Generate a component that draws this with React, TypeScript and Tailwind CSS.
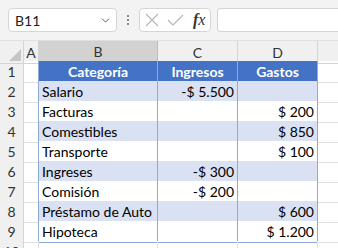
import { ChevronDown } from 'lucide-react';

const ROWS: { cat: string; ing: string; gas: string }[] = [
  { cat: 'Salario', ing: '-$ 5.500', gas: '' },
  { cat: 'Facturas', ing: '', gas: '$ 200' },
  { cat: 'Comestibles', ing: '', gas: '$ 850' },
  { cat: 'Transporte', ing: '', gas: '$ 100' },
  { cat: 'Ingreses', ing: '-$ 300', gas: '' },
  { cat: 'Comisión', ing: '-$ 200', gas: '' },
  { cat: 'Préstamo de Auto', ing: '', gas: '$ 600' },
  { cat: 'Hipoteca', ing: '', gas: '$ 1.200' },
];

const COLS = 'grid-cols-[24px_15px_119px_80px_80px_1fr]';

export default function App() {
  return (
    <div className="w-[338px] h-[248px] overflow-hidden bg-white text-[14px] text-black whitespace-nowrap" style={{ fontFamily: 'Lato, "Open Sans", sans-serif' }}>
      {/* Formula bar */}
      <div className="h-[41px] bg-[#f3f3f3] flex items-center pl-2 border-b border-[#e0e0e0]">
        <div className="w-[109px] h-[24px] bg-white border border-[#d6d6d6] rounded-[4px] flex items-center justify-between pl-[6px] pr-[4px]">
          <span className="text-[14px] text-[#222]">B11</span>
          <ChevronDown size={13} strokeWidth={1.6} className="text-[#444]" />
        </div>
        <div className="w-[22px] flex flex-col items-center gap-[2px]">
          <span className="w-[2px] h-[2px] bg-[#888]" />
          <span className="w-[2px] h-[2px] bg-[#888]" />
          <span className="w-[2px] h-[2px] bg-[#888]" />
        </div>
        <div className="w-[72px] h-[24px] bg-white border border-[#d6d6d6] rounded-[4px] flex items-center pl-[5px]">
          <svg width="14" height="14" viewBox="0 0 14 14" className="text-[#b4b4b4]">
            <path d="M1 1L13 13M13 1L1 13" stroke="currentColor" strokeWidth="1.1" fill="none" />
          </svg>
          <svg width="17" height="12" viewBox="0 0 17 12" className="ml-[8px] text-[#b4b4b4]">
            <path d="M1 6L6 11L16 1" stroke="currentColor" strokeWidth="1.1" fill="none" />
          </svg>
          <span className="ml-[9px] text-[16px] italic text-[#333]" style={{ fontFamily: '"Liberation Serif", serif' }}>
            <span className="font-bold">f</span>x
          </span>
        </div>
        <div className="ml-[6px] flex-1 h-[24px] bg-white border border-[#d6d6d6] rounded-l-[4px] border-r-0" />
      </div>

      {/* Column headers */}
      <div className={`grid ${COLS} h-[20px] bg-[#f0f0f0] text-[#333] text-[14px]`}>
        <div className="relative border-r border-b border-[#d4d4d4]">
          <div className="absolute right-[2px] bottom-[2px] w-0 h-0 border-l-[12px] border-l-transparent border-b-[12px] border-b-[#c6c6c6]" />
        </div>
        <div className="flex items-center justify-center border-r border-b border-[#d4d4d4]">A</div>
        <div className="flex items-center justify-center bg-[#d2d2d2] border-r border-[#bdbdbd] border-b-2 border-b-[#217346]">B</div>
        <div className="flex items-center justify-center border-r border-b border-[#d4d4d4]">C</div>
        <div className="flex items-center justify-center border-r border-b border-[#d4d4d4]">D</div>
        <div className="border-b border-[#d4d4d4]" />
      </div>

      {/* Row 1 */}
      <div className={`grid ${COLS} h-[20px]`}>
        <div className="flex items-center justify-center bg-[#f0f0f0] text-[#333] border-r border-b border-[#d4d4d4]">1</div>
        <div className="border-r border-b border-[#e1e1e1] border-r-[#8eaadb]" />
        <div className="flex items-center justify-center bg-[#4472c4] text-white font-bold border-r border-b border-[#8eaadb]">Categoría</div>
        <div className="flex items-center justify-center bg-[#4472c4] text-white font-bold border-r border-b border-[#8eaadb]">Ingresos</div>
        <div className="flex items-center justify-center bg-[#4472c4] text-white font-bold border-r border-b border-[#8eaadb]">Gastos</div>
        <div className="border-b border-[#e1e1e1]" />
      </div>

      {ROWS.map((r, i) => {
        const band = i % 2 === 0 ? 'bg-[#d9e1f2]' : 'bg-white';
        return (
          <div key={r.cat} className={`grid ${COLS} h-[20px]`}>
            <div className="flex items-center justify-center bg-[#f0f0f0] text-[#333] border-r border-b border-[#d4d4d4]">{i + 2}</div>
            <div className="border-r border-b border-[#e1e1e1] border-r-[#8eaadb]" />
            <div className={`flex items-center pl-[3px] border-r border-b border-[#8eaadb] ${band}`}>{r.cat}</div>
            <div className={`flex items-center justify-end pr-[3px] border-r border-b border-[#8eaadb] ${band}`}>{r.ing}</div>
            <div className={`flex items-center justify-end pr-[3px] border-r border-b border-[#8eaadb] ${band}`}>{r.gas}</div>
            <div className="border-b border-[#e1e1e1]" />
          </div>
        );
      })}

      {/* Row 10 */}
      <div className={`grid ${COLS} h-[20px]`}>
        <div className="flex items-center justify-center bg-[#f0f0f0] text-[#333] border-r border-b border-[#d4d4d4]">10</div>
        <div className="border-r border-b border-[#e1e1e1]" />
        <div className="border-r border-b border-[#e1e1e1]" />
        <div className="border-r border-b border-[#e1e1e1]" />
        <div className="border-r border-b border-[#e1e1e1]" />
        <div className="border-b border-[#e1e1e1]" />
      </div>
    </div>
  );
}
